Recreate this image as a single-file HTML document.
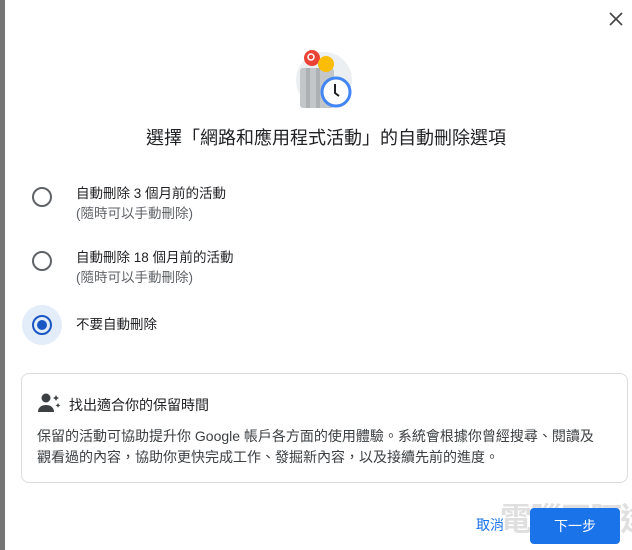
<!DOCTYPE html>
<html><head><meta charset="utf-8"><style>
*{margin:0;padding:0;box-sizing:border-box}
body{width:632px;height:550px;background:#fff;position:relative;overflow:hidden;font-family:"Liberation Sans","Noto Sans CJK TC",sans-serif;color:#202124}
.bar{position:absolute;left:0;top:0;width:5px;height:550px;background:#757575}
.title{position:absolute;top:124px;left:0;width:652px;text-align:center;font-size:18px;color:#202124}
.opt{position:absolute;left:76px;font-size:13.5px;line-height:20px}
.sub{color:#5f6368}
.radio{position:absolute;width:20px;height:20px;border:2px solid #5f6368;border-radius:50%}
.box{position:absolute;left:21px;top:373px;width:607px;height:110px;border:1px solid #dadce0;border-radius:8px}
.btn{position:absolute;left:530px;top:508px;width:90px;height:36px;background:#1a73e8;border-radius:4px;color:#fff;font-size:14px;text-align:center;line-height:36px}
.cancel{position:absolute;left:476px;top:515px;color:#1a73e8;font-size:14px}
.wm{position:absolute;left:500px;top:494px;font-size:32px;color:rgba(150,150,150,.3);font-weight:bold;letter-spacing:-2px;white-space:nowrap}
</style></head><body>
<div class="bar"></div>
<svg style="position:absolute;left:609px;top:12px" width="14" height="14" viewBox="0 0 14 14"><path d="M1 1L13 13M13 1L1 13" stroke="#444" stroke-width="1.6"/></svg>
<svg style="position:absolute;left:290px;top:46px" width="70" height="70" viewBox="0 0 70 70">
<circle cx="34" cy="34" r="28" fill="#eceff1"/>
<rect x="10" y="22" width="34" height="40" rx="3" fill="#c4c7c9"/>
<rect x="16" y="22" width="4" height="40" fill="#aeb1b4"/><rect x="26" y="22" width="4" height="40" fill="#aeb1b4"/>
<circle cx="22" cy="12" r="8" fill="#ea4335"/><circle cx="21" cy="11" r="3" fill="none" stroke="#fff" stroke-width="1.5"/>
<circle cx="36" cy="18" r="8" fill="#fbbc04"/>
<circle cx="46" cy="46" r="14" fill="#fff" stroke="#4285f4" stroke-width="3"/>
<path d="M45 38v9l4 3" stroke="#202124" stroke-width="2" fill="none"/>
</svg>
<div class="title">選擇「網路和應用程式活動」的自動刪除選項</div>
<div class="radio" style="left:32px;top:187px"></div>
<div class="opt" style="top:184px">自動刪除 3 個月前的活動<br><span class="sub">(隨時可以手動刪除)</span></div>
<div class="radio" style="left:32px;top:251px"></div>
<div class="opt" style="top:248px">自動刪除 18 個月前的活動<br><span class="sub">(隨時可以手動刪除)</span></div>
<div style="position:absolute;left:22px;top:305px;width:40px;height:40px;border-radius:50%;background:#e3ecf9"></div>
<div class="radio" style="left:32px;top:315px;border-color:#1a57c4"></div>
<div style="position:absolute;left:37px;top:320px;width:10px;height:10px;border-radius:50%;background:#1a57c4"></div>
<div class="opt" style="top:315px">不要自動刪除</div>
<div class="box"></div>
<svg style="position:absolute;left:38px;top:392px" width="24" height="22" viewBox="0 0 24 22"><circle cx="8" cy="6" r="4.5" fill="#3c4043"/><path d="M0 20c0-5 4-7 8-7s8 2 8 7z" fill="#3c4043"/><path d="M18 3l1 2 2 1-2 1-1 2-1-2-2-1 2-1zM20 11l.8 1.6 1.6.8-1.6.8-.8 1.6-.8-1.6-1.6-.8 1.6-.8z" fill="#3c4043"/></svg>
<div style="position:absolute;left:69px;top:395px;font-size:14px">找出適合你的保留時間</div>
<div style="position:absolute;left:37px;top:426px;width:564px;font-size:14px;line-height:21px;color:#3c4043">保留的活動可協助提升你 Google 帳戶各方面的使用體驗。系統會根據你曾經搜尋、閱讀及觀看過的內容，協助你更快完成工作、發掘新內容，以及接續先前的進度。</div>
<div class="wm">電腦王阿達</div>
<div class="btn">下一步</div>
<div class="cancel">取消</div>
</body></html>
